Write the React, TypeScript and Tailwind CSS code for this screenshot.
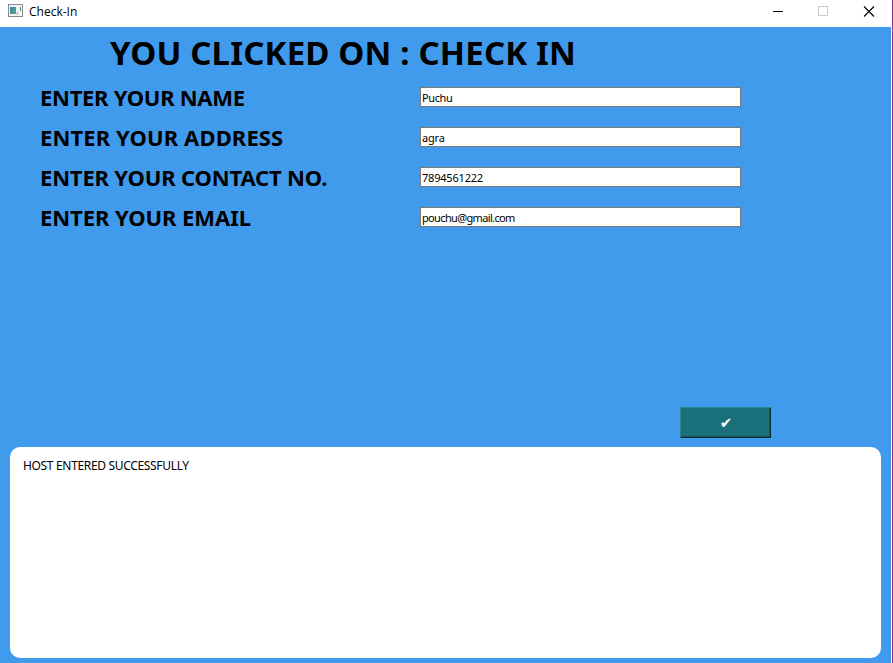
const fields = [
  { label: 'ENTER YOUR NAME', value: 'Puchu', tracking: 'tracking-[-0.29px]', valueTracking: 'tracking-[-0.4px]' },
  { label: 'ENTER YOUR ADDRESS', value: 'agra', tracking: 'tracking-[0.11px]', valueTracking: 'tracking-[-0.2px]' },
  { label: 'ENTER YOUR CONTACT NO.', value: '7894561222', tracking: 'tracking-[-0.17px]', valueTracking: 'tracking-[-0.2px]' },
  { label: 'ENTER YOUR EMAIL', value: 'pouchu@gmail.com', tracking: 'tracking-[-0.07px]', valueTracking: 'tracking-[-0.65px]' },
];

function AppIcon() {
  return (
    <svg width="15" height="13" viewBox="0 0 15 13" shapeRendering="crispEdges">
      <defs>
        <linearGradient id="pane" x1="0" y1="0" x2="1" y2="1">
          <stop offset="0" stopColor="#3f7fb0" />
          <stop offset="1" stopColor="#55a874" />
        </linearGradient>
      </defs>
      <rect width="15" height="13" fill="#878b93" />
      <rect x="1" y="1" width="13" height="11" fill="#f4f5f6" />
      <rect x="2" y="3" width="6" height="7" fill="url(#pane)" />
      <rect x="8" y="8" width="3" height="3" fill="#d3d5d9" />
      <rect x="12" y="3" width="1" height="4" fill="#3e9a70" />
    </svg>
  );
}

function TitleBar() {
  return (
    <header className="flex h-[27px] shrink-0 items-start bg-white">
      <div className="flex pl-2 pt-1">
        <AppIcon />
      </div>
      <span className="ml-[6px] mt-[3px] font-['Open_Sans',sans-serif] text-[12px] leading-[18px] text-black">Check-In</span>
      <div className="ml-auto flex pr-[17px] pt-[6px]">
        <svg width="102" height="11" viewBox="0 0 102 11" fill="none" shapeRendering="crispEdges">
          <path d="M0 5.5h10" stroke="#000" />
          <rect x="45.5" y="0.5" width="9" height="9" stroke="#ccc" />
          <path d="M91 0.5l10 10M101 0.5l-10 10" stroke="#000" shapeRendering="auto" strokeWidth="1.1" />
        </svg>
      </div>
    </header>
  );
}

export default function App() {
  return (
    <div className="flex h-[663px] w-[893px] overflow-hidden border-r border-[#8b2f9b] bg-white font-['Noto_Sans',sans-serif] text-black">
      <div className="flex w-full flex-col">
        <TitleBar />
        <main className="mr-px flex flex-1 flex-col bg-[#409bec]">
          <h1 className="ml-[110px] mt-1 h-[46px] whitespace-nowrap text-[33px] font-bold leading-[44px]">
            <span className="tracking-[0.16px]">YOU CLICKED ON : CHECK IN</span>
          </h1>
          <form className="flex flex-col">
            {fields.map((f) => (
              <div key={f.label} className="flex h-10 items-start pl-10 pt-[10px]">
                <label className="w-[380px] whitespace-nowrap text-[22px] font-bold leading-[20px]">
                  <span className={f.tracking}>{f.label}</span>
                </label>
                <div className="flex h-5 w-[321px] items-end border border-[#7a7a7a] bg-white pl-px text-[11px] leading-[16px]">
                  <span className={f.valueTracking}>{f.value}</span>
                </div>
              </div>
            ))}
          </form>
          <button
            type="button"
            className="ml-[680px] mt-[170px] flex h-[31px] w-[91px] items-center justify-center border-b border-l border-r border-t border-b-[#0c2a2e] border-l-[#2b8a90] border-r-[#0c2a2e] border-t-[#2b8a90] bg-[#196f7a] pl-px pt-[2px] font-['DejaVu_Sans',sans-serif] text-[15px] text-white shadow-[inset_-1px_-1px_0_#12525a]"
          >
            ✔
          </button>
          <section className="mx-[10px] mt-[9px] h-[211px] rounded-[10px] bg-white pl-[13px] pt-[10px] text-[12px] leading-[18px]">
            <span className="tracking-[-0.33px]">HOST ENTERED SUCCESSFULLY</span>
          </section>
        </main>
      </div>
    </div>
  );
}
